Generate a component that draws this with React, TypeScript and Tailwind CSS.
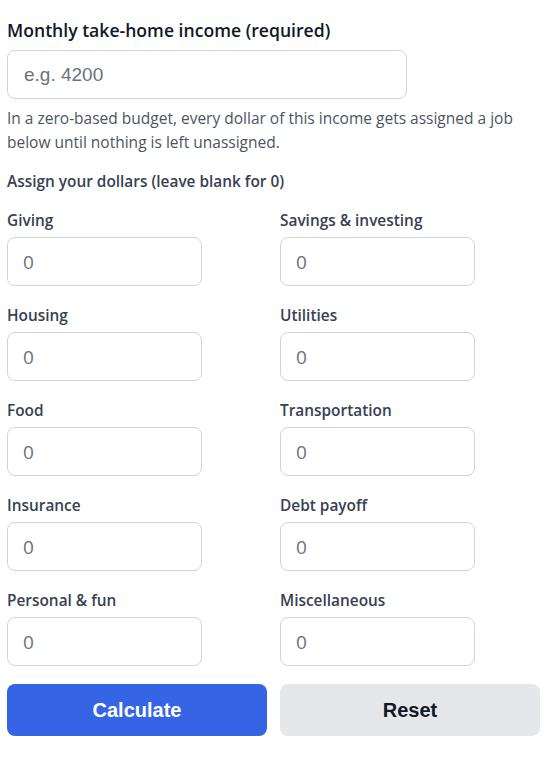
const categories = [
  "Giving",
  "Savings & investing",
  "Housing",
  "Utilities",
  "Food",
  "Transportation",
  "Insurance",
  "Debt payoff",
  "Personal & fun",
  "Miscellaneous",
];

const labelFont = { fontFamily: '"Open Sans", "Noto Sans", sans-serif' };

export default function App() {
  return (
    <div className="bg-white min-h-screen">
      <div className="w-[533px] ml-[7px] pt-[18px]" style={labelFont}>
        <label className="block text-[17.6px] leading-[24px] font-semibold text-[#111827]">
          Monthly take-home income (required)
        </label>
        <input
          type="text"
          placeholder="e.g. 4200"
          className="mt-[8px] block w-[400px] h-[49px] rounded-[8px] border border-[#d1d5db] px-[16px] text-[19px] text-[#111827] placeholder:text-[#6b7280] outline-none font-['Liberation_Sans',Arial,sans-serif]"
        />
        <p className="mt-[7px] text-[15.5px] leading-[24px] text-[#4b5563]">
          In a zero-based budget, every dollar of this income gets assigned a job below until
          nothing is left unassigned.
        </p>
        <p className="mt-[17px] text-[15.4px] leading-[22px] font-semibold text-[#374151]">
          Assign your dollars (leave blank for 0)
        </p>
        <div className="mt-[17px] grid grid-cols-2 gap-x-[13px] gap-y-[19px]">
          {categories.map((c) => (
            <div key={c}>
              <label className="block text-[15.4px] leading-[22px] font-semibold text-[#374151]">
                {c}
              </label>
              <input
                type="text"
                placeholder="0"
                className="mt-[5px] block w-[195px] h-[49px] rounded-[8px] border border-[#d1d5db] px-[15px] text-[19px] text-[#111827] placeholder:text-[#6b7280] outline-none"
              />
            </div>
          ))}
        </div>
        <div className="mt-[18px] grid grid-cols-2 gap-x-[13px] font-['Liberation_Sans',Arial,sans-serif]">
          <button className="h-[52px] rounded-[8px] bg-[#3565e5] text-white text-[20px] font-bold">
            Calculate
          </button>
          <button className="h-[52px] rounded-[8px] bg-[#e5e7eb] text-[#111827] text-[20px] font-bold">
            Reset
          </button>
        </div>
      </div>
    </div>
  );
}
